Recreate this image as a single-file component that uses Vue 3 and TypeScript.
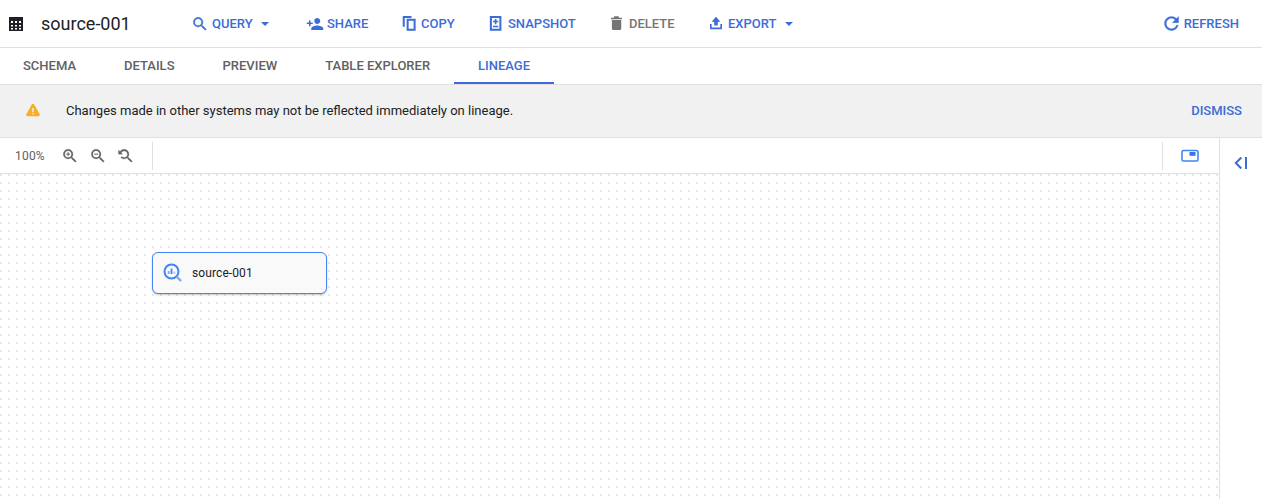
<script setup lang="ts">
const actions = [
  { label: 'QUERY', icon: 'M15.5 14h-.79l-.28-.27A6.47 6.47 0 0 0 16 9.5 6.5 6.5 0 1 0 9.5 16c1.61 0 3.09-.59 4.23-1.57l.27.28v.79l5 4.99L20.49 19l-4.99-5zm-6 0C7.01 14 5 11.99 5 9.5S7.01 5 9.5 5 14 7.01 14 9.5 11.99 14 9.5 14z', caret: true, muted: false, cls: 'a-query' },
  { label: 'SHARE', icon: 'M15 12c2.21 0 4-1.79 4-4s-1.79-4-4-4-4 1.79-4 4 1.79 4 4 4zm-9-2V7H4v3H1v2h3v3h2v-3h3v-2H6zm9 4c-2.67 0-8 1.34-8 4v2h16v-2c0-2.66-5.33-4-8-4z', caret: false, muted: false, cls: 'a-share' },
  { label: 'COPY', icon: 'M2.300 1.330h11.700V4H5v11.500H2.300zM7.500 5h12v16h-12zm2.700 2.700v10.600h6.600V7.700z', caret: false, muted: false, cls: 'a-copy' },
  { label: 'SNAPSHOT', icon: 'M3.800 1.330h15.400V21H3.800zm2.700 2.700v14.300h10V4.030zm3.900 1.400h2.200v2.400h2.400v2h-2.400v2.400h-2.200v-2.400H8v-2h2.400zM8 14.300h7v2H8z', caret: false, muted: false, cls: 'a-snapshot' },
  { label: 'DELETE', icon: 'M6.500 18c0 1.100.9 2 2 2h8.500c1.100 0 2-.9 2-2V6.500H6.500zM20 3.500h-3.800l-1-1.700h-5.500l-1 1.700H5.300v2H20z', caret: false, muted: true, cls: 'a-delete' },
  { label: 'EXPORT', icon: 'M13.330 2.300 7.500 9H11v5h4.700V9h3.500zM5.330 12h2.200v4.700h11.600V12h2.200v7H5.330z', caret: true, muted: false, cls: 'a-export' },
]
const tabs = ['SCHEMA', 'DETAILS', 'PREVIEW', 'TABLE EXPLORER', 'LINEAGE']
const activeTab = 'LINEAGE'
</script>

<template>
  <div class="page">
    <header class="topbar">
      <svg class="table-icon" viewBox="0 0 16 16" width="16" height="16">
        <path fill="#202124" fill-rule="evenodd" d="M1 1h14v14H1zM3 5v2h2V5zm4 0v2h2V5zm4 0v2h2V5zM3 9v1.500h2V9zm4 0v1.500h2V9zm4 0v1.500h2V9zM3 12v1.500h2V12zm4 0v1.500h2V12zm4 0v1.500h2V12z" />
      </svg>
      <h1 class="title">source-001</h1>
      <div class="actions">
        <button v-for="a in actions" :key="a.label" class="action" :class="[a.cls, { muted: a.muted }]">
          <svg viewBox="0 0 24 24" width="18" height="18"><path fill="currentColor" fill-rule="evenodd" :d="a.icon" /></svg>
          <span>{{ a.label }}</span>
          <i v-if="a.caret" class="caret"></i>
        </button>
      </div>
      <button class="action refresh">
        <svg viewBox="0 0 24 24" width="21" height="21"><path fill="currentColor" d="M17.650 6.350A7.958 7.958 0 0 0 12 4c-4.420 0-7.990 3.580-7.990 8s3.570 8 7.990 8c3.730 0 6.840-2.550 7.730-6h-2.080A5.990 5.990 0 0 1 12 18c-3.310 0-6-2.690-6-6s2.690-6 6-6c1.660 0 3.140.69 4.220 1.780L13 11h7V4l-2.350 2.350z" /></svg>
        <span>REFRESH</span>
      </button>
    </header>

    <nav class="tabs">
      <div v-for="t in tabs" :key="t" class="tab" :class="{ active: t === activeTab }">{{ t }}</div>
    </nav>

    <div class="banner">
      <svg class="warn" viewBox="0 0 24 24" width="16" height="16"><path fill="#f6ae2d" d="M12 2.500c.7 0 1.300.4 1.700 1l8.300 15c.7 1.300-.2 3-1.700 3H3.700c-1.500 0-2.400-1.700-1.700-3l8.300-15c.4-.6 1-1 1.700-1z" /><path fill="#fff" d="M11 9h2v6h-2zm0 7.500h2v2h-2z" /></svg>
      <span class="banner-text">Changes made in other systems may not be reflected immediately on lineage.</span>
      <span class="dismiss">DISMISS</span>
    </div>

    <div class="workspace">
      <main class="graph">
        <div class="graph-toolbar">
          <div class="zoom-group">
            <span class="pct">100%</span>
            <svg viewBox="0 0 24 24" width="18" height="18" class="zi"><path d="M15.500 14h-.79l-.28-.27A6.470 6.470 0 0 0 16 9.500 6.500 6.500 0 1 0 9.500 16c1.610 0 3.090-.59 4.230-1.570l.27.28v.79l5 4.990L20.490 19l-4.990-5zm-6 0C7.010 14 5 11.990 5 9.500S7.010 5 9.500 5 14 7.010 14 9.500 11.990 14 9.500 14z" /><path d="M12 10h-2v2H9v-2H7V9h2V7h1v2h2v1z" /></svg>
            <svg viewBox="0 0 24 24" width="18" height="18" class="zi"><path d="M15.500 14h-.79l-.28-.27A6.470 6.470 0 0 0 16 9.500 6.500 6.500 0 1 0 9.500 16c1.610 0 3.090-.59 4.230-1.570l.27.28v.79l5 4.990L20.490 19l-4.990-5zm-6 0C7.010 14 5 11.990 5 9.500S7.010 5 9.500 5 14 7.010 14 9.500 11.990 14 9.500 14zM7 9h5v1H7z" /></svg>
            <svg viewBox="0 0 24 24" width="18" height="18" class="zi"><path d="M15.500 14h-.79l-.28-.27A6.470 6.470 0 0 0 16 9.500 6.500 6.500 0 0 0 9.500 3 6.500 6.500 0 0 0 4.100 5.900L2 4v5.500h5.500L5.600 7.600A4.500 4.500 0 0 1 14 9.500c0 2.490-2.010 4.500-4.500 4.500-1.300 0-2.400-.5-3.200-1.300L4.900 14.100A6.470 6.470 0 0 0 9.500 16c1.610 0 3.090-.59 4.230-1.570l.27.28v.79l5 4.990L20.490 19l-4.990-5z" /></svg>
          </div>
          <div class="spacer"></div>
          <div class="mini">
            <svg viewBox="0 0 18 14" width="18" height="14"><rect x="1" y="1.500" width="16" height="10.500" rx="1.500" fill="none" stroke="#4285f4" stroke-width="1.600" /><rect x="8.500" y="3" width="6" height="3.800" fill="#2f75e6" /></svg>
          </div>
        </div>
        <div class="canvas">
          <div class="node">
            <svg viewBox="0 0 20 20" width="20" height="20">
              <circle cx="8.500" cy="8.500" r="7" fill="none" stroke="#4285f4" stroke-width="2" />
              <path d="M13.500 13.500l4.500 4.500" stroke="#7baaf7" stroke-width="2.400" fill="none" />
              <rect x="4.800" y="8" width="1.800" height="3" fill="#7baaf7" />
              <rect x="7.600" y="5.500" width="1.800" height="5.500" fill="#4285f4" />
              <rect x="10.400" y="8.500" width="1.800" height="2.500" fill="#aecbfa" />
            </svg>
            <span>source-001</span>
          </div>
        </div>
      </main>
      <aside class="side">
        <svg viewBox="0 0 14 14" width="14" height="14"><path fill="none" stroke="#3b6cd7" stroke-width="2" d="M7.300 1.500 1.800 7l5.500 5.500" /><path fill="#3b6cd7" d="M11 1h2v12h-2z" /></svg>
      </aside>
    </div>
  </div>
</template>

<style>
html, body { margin: 0; background: #fff; overflow: hidden; }
</style>

<style scoped>
.page {
  width: 1262px;
  height: 499px;
  display: flex;
  flex-direction: column;
  font-family: Roboto, "Liberation Sans", sans-serif;
  color: #202124;
  overflow: hidden;
}
.topbar {
  height: 47px;
  border-bottom: 1px solid #e0e0e0;
  display: flex;
  align-items: center;
  flex: none;
}
.table-icon { margin-left: 8px; flex: none; }
.title {
  margin: 0 0 0 17px;
  width: 150px;
  font-size: 18px;
  font-weight: 400;
  color: #202124;
}
.actions { display: flex; align-items: center; }
.action {
  display: flex;
  align-items: center;
  gap: 3px;
  background: none;
  border: 0;
  padding: 0;
  font: 500 13px Roboto, "Liberation Sans", sans-serif;
  color: #3b6cd7;
}
.action.muted { color: #757575; }
.a-query { width: 115px; }
.a-query path, .refresh path {
  stroke: currentColor;
  stroke-width: 0.4px;
}
.a-share { width: 95px; }
.a-copy { width: 86px; gap: 2px; }
.a-snapshot { width: 120px; }
.a-delete { width: 99px; gap: 4px; }
.a-export { gap: 4px; }
.caret {
  width: 0;
  height: 0;
  margin-left: 5px;
  border-left: 4px solid transparent;
  border-right: 4px solid transparent;
  border-top: 4px solid #3b6cd7;
}
.refresh { margin-left: auto; margin-right: 23px; gap: 2px; }
.tabs {
  height: 36px;
  border-bottom: 1px solid #e0e0e0;
  display: flex;
  flex: none;
}
.tab {
  padding: 0 24px 2px;
  display: flex;
  align-items: center;
  font-size: 13px;
  font-weight: 500;
  color: #616161;
  box-sizing: border-box;
  height: 36px;
}
.tab.active {
  color: #3b6cd7;
  box-shadow: inset 0 -2px 0 #3b6cd7;
}
.tab:first-child { padding-left: 23px; }
.banner {
  height: 53px;
  padding-bottom: 2px;
  box-sizing: border-box;
  background: #f1f1f1;
  border-bottom: 1px solid #e0e0e0;
  display: flex;
  align-items: center;
  flex: none;
}
.warn { margin-left: 25px; flex: none; }
.banner-text { margin-left: 25px; font-size: 13px; color: #202124; }
.dismiss {
  margin-left: auto;
  margin-right: 20px;
  font-size: 13px;
  font-weight: 500;
  color: #3b6cd7;
}
.workspace { flex: 1; display: flex; min-height: 0; }
.graph { flex: 1; display: flex; flex-direction: column; min-width: 0; }
.graph-toolbar {
  height: 35px;
  border-bottom: 1px solid #e0e0e0;
  display: flex;
  align-items: center;
  flex: none;
}
.zoom-group {
  width: 153px;
  height: 28px;
  border-right: 1px solid #e0e0e0;
  display: flex;
  align-items: center;
  color: #616161;
  flex: none;
  box-sizing: border-box;
}
.pct { margin-left: 15px; width: 46px; font-size: 12px; letter-spacing: 0.2px; color: #616161; }
.zi { margin-right: 10px; flex: none; }
.zi path {
  fill: currentColor;
  stroke: currentColor;
  stroke-width: 0.3px;
}
.spacer { flex: 1; }
.mini {
  width: 57px;
  height: 28px;
  border-left: 1px solid #e0e0e0;
  display: flex;
  align-items: center;
  justify-content: center;
  padding-right: 2px;
  box-sizing: border-box;
}
.canvas {
  flex: 1;
  padding: 78px 0 0 152px;
  background-color: #fff;
  background-image: radial-gradient(circle at 1px 1px, #e8e8e8 1.4px, transparent 1.5px);
  background-size: 8px 8px;
}
.node {
  width: 175px;
  height: 42px;
  box-sizing: border-box;
  border: 1px solid #4285f4;
  border-radius: 6px;
  background: #f9f9f9;
  box-shadow: 0 1px 2px rgba(60, 64, 67, 0.3);
  display: flex;
  align-items: center;
  gap: 9px;
  padding-left: 10px;
  font-size: 12px;
  letter-spacing: 0.1px;
  color: #202124;
}
.side {
  width: 43px;
  flex: none;
  border-left: 1px solid #e0e0e0;
  display: flex;
  justify-content: center;
  padding-top: 18px;
  box-sizing: border-box;
}
.side svg { display: block; }
</style>
